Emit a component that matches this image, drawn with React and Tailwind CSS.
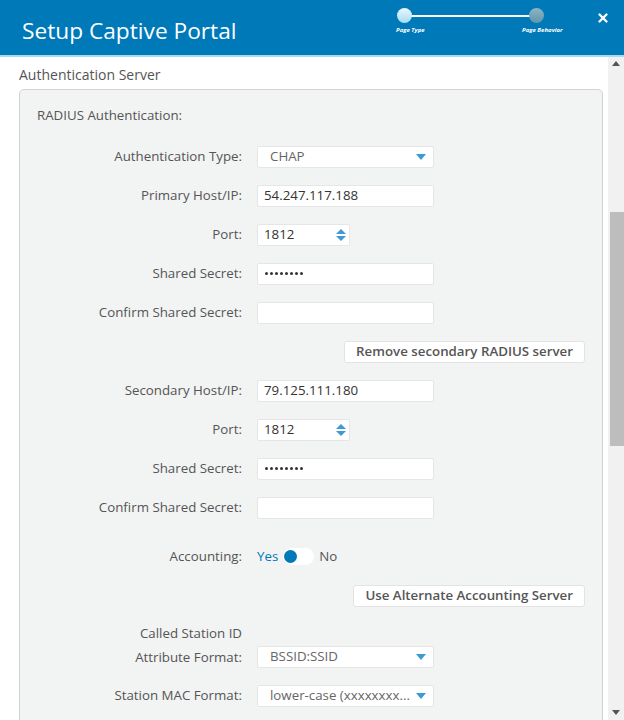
import { X } from 'lucide-react'

const FONT = { fontFamily: '"Open Sans", "Noto Sans", sans-serif' }

function Caret() {
  return (
    <svg width="10" height="6" viewBox="0 0 10 6" className="shrink-0">
      <path d="M0 0h10L5 6z" fill="#3d9ad6" />
    </svg>
  )
}

function Spinner() {
  return (
    <svg width="10" height="14" viewBox="0 0 10 14" className="shrink-0">
      <path d="M0 6L5 1l5 5z" fill="#3d9ad6" />
      <path d="M0 8h10L5 13z" fill="#3d9ad6" />
    </svg>
  )
}

function Row({ label, children, className = '' }) {
  return (
    <div className={`flex items-center h-[39px] ${className}`}>
      <div className="w-[222px] text-right text-[13.3px] text-[#555]">{label}</div>
      <div className="ml-[15px] flex items-center">{children}</div>
    </div>
  )
}

function TextInput({ value = '' }) {
  return (
    <div className="w-[177px] h-[22px] bg-white border border-[#e6e6e6] rounded-[2px] flex items-center px-[6px] text-[13.3px] text-[#333]">
      {value}
    </div>
  )
}

function Secret() {
  return (
    <div className="w-[177px] h-[22px] bg-white border border-[#e6e6e6] rounded-[2px] flex items-center px-[7px] gap-[2px]">
      {Array.from({ length: 8 }).map((_, i) => (
        <span key={i} className="w-[3px] h-[3px] rounded-full bg-[#333]" />
      ))}
    </div>
  )
}

function Select({ value }) {
  return (
    <div className="w-[177px] h-[22px] bg-white border border-[#e6e6e6] rounded-[2px] flex items-center justify-between gap-[4px] pl-[12px] pr-[7px] text-[13.3px] text-[#666]">
      <span className="whitespace-nowrap">{value}</span>
      <Caret />
    </div>
  )
}

function PortInput({ value }) {
  return (
    <div className="w-[93px] h-[22px] bg-white border border-[#e6e6e6] rounded-[2px] flex items-center justify-between pl-[6px] pr-[3px] text-[13.3px] text-[#333]">
      <span>{value}</span>
      <Spinner />
    </div>
  )
}

function Button({ children }) {
  return (
    <div className="h-[22px] bg-white border border-[#e3e3e3] rounded-[3px] flex items-center px-[11px] text-[13.3px] font-semibold text-[#555]">
      {children}
    </div>
  )
}

export default function App() {
  return (
    <div className="w-[624px] h-[720px] bg-white overflow-hidden flex flex-col" style={FONT}>
      {/* Header */}
      <header className="h-[57px] shrink-0 bg-[#0079b8] border-b-2 border-[#a9d9ef] flex items-start">
        <h1 className="ml-[22px] mt-[15px] text-[22.7px] leading-[32px] text-white">Setup Captive Portal</h1>
        {/* progress steps */}
        <div className="ml-auto relative w-[180px] h-[40px]">
          <div className="absolute left-[15px] top-[15px] w-[132px] h-[2px] bg-white" />
          <div className="absolute left-[7px] top-[8px] w-[15px] h-[15px] rounded-full bg-gradient-to-b from-[#eaf8fd] to-[#a5dcf0]" />
          <div className="absolute left-[139px] top-[8px] w-[15px] h-[15px] rounded-full bg-gradient-to-b from-[#8fb3c4] to-[#5f97ad]" />
          <div className="absolute left-[6px] top-[27px] text-[6px] font-bold italic text-white leading-none whitespace-nowrap">Page Type</div>
          <div className="absolute left-[132px] top-[27px] text-[6px] font-bold italic text-white leading-none whitespace-nowrap">Page Behavior</div>
        </div>
        <div className="ml-[26px] mr-[14px] mt-[11px] text-white">
          <X size={14} strokeWidth={4} />
        </div>
      </header>

      <div className="flex-1 flex min-h-0">
        {/* Content */}
        <div className="flex-1 overflow-hidden pl-[19px] pr-[5px]">
          <div className="pt-[8px] text-[14px] leading-[20px] text-[#555]">Authentication Server</div>
          <div className="mt-[4px] border border-[#d2d2d2] rounded-[5px] bg-[#f2f3f3] pt-[15px] pb-[20px] pr-[17px]">
            <div className="pl-[17px] text-[13.3px] leading-[20px] text-[#555]">RADIUS Authentication:</div>
            <div className="mt-[12px]">
              <Row label="Authentication Type:"><Select value="CHAP" /></Row>
              <Row label="Primary Host/IP:"><TextInput value="54.247.117.188" /></Row>
              <Row label="Port:"><PortInput value="1812" /></Row>
              <Row label="Shared Secret:"><Secret /></Row>
              <Row label="Confirm Shared Secret:"><TextInput /></Row>
              <div className="h-[39px] flex items-center justify-end">
                <Button>Remove secondary RADIUS server</Button>
              </div>
              <Row label="Secondary Host/IP:"><TextInput value="79.125.111.180" /></Row>
              <Row label="Port:"><PortInput value="1812" /></Row>
              <Row label="Shared Secret:"><Secret /></Row>
              <Row label="Confirm Shared Secret:"><TextInput /></Row>
              <Row label="Accounting:" className="mt-[10px]">
                <span className="text-[13.3px] text-[#0079b8]">Yes</span>
                <div className="ml-[5px] w-[31px] h-[17px] rounded-full bg-white flex items-center pl-[1px]">
                  <div className="w-[13px] h-[13px] rounded-full bg-[#0079b8]" />
                </div>
                <span className="ml-[5px] text-[13.3px] text-[#555]">No</span>
              </Row>
              <div className="h-[39px] flex items-center justify-end">
                <Button>Use Alternate Accounting Server</Button>
              </div>
              <div className="mt-[6px] flex items-end">
                <div className="w-[222px] text-right text-[13.3px] leading-[24px] text-[#555]">
                  <div>Called Station ID</div>
                  <div>Attribute Format:</div>
                </div>
                <div className="ml-[15px] h-[24px] flex items-center"><Select value="BSSID:SSID" /></div>
              </div>
              <Row label="Station MAC Format:" className="mt-[7px]"><Select value="lower-case (xxxxxxxx..." /></Row>
            </div>
          </div>
        </div>

        {/* Scrollbar */}
        <div className="w-[16px] shrink-0 bg-[#f1f1f1] flex flex-col items-center">
          <svg width="8" height="5" viewBox="0 0 8 5" className="mt-[4px]"><path d="M0 5L4 0l4 5z" fill="#555" /></svg>
          <div className="mt-[146px] w-[14px] ml-[2px] h-[234px] bg-[#bdbdbd]" />
          <svg width="8" height="5" viewBox="0 0 8 5" className="mt-auto mb-[5px]"><path d="M0 0h8L4 5z" fill="#555" /></svg>
        </div>
      </div>
    </div>
  )
}
